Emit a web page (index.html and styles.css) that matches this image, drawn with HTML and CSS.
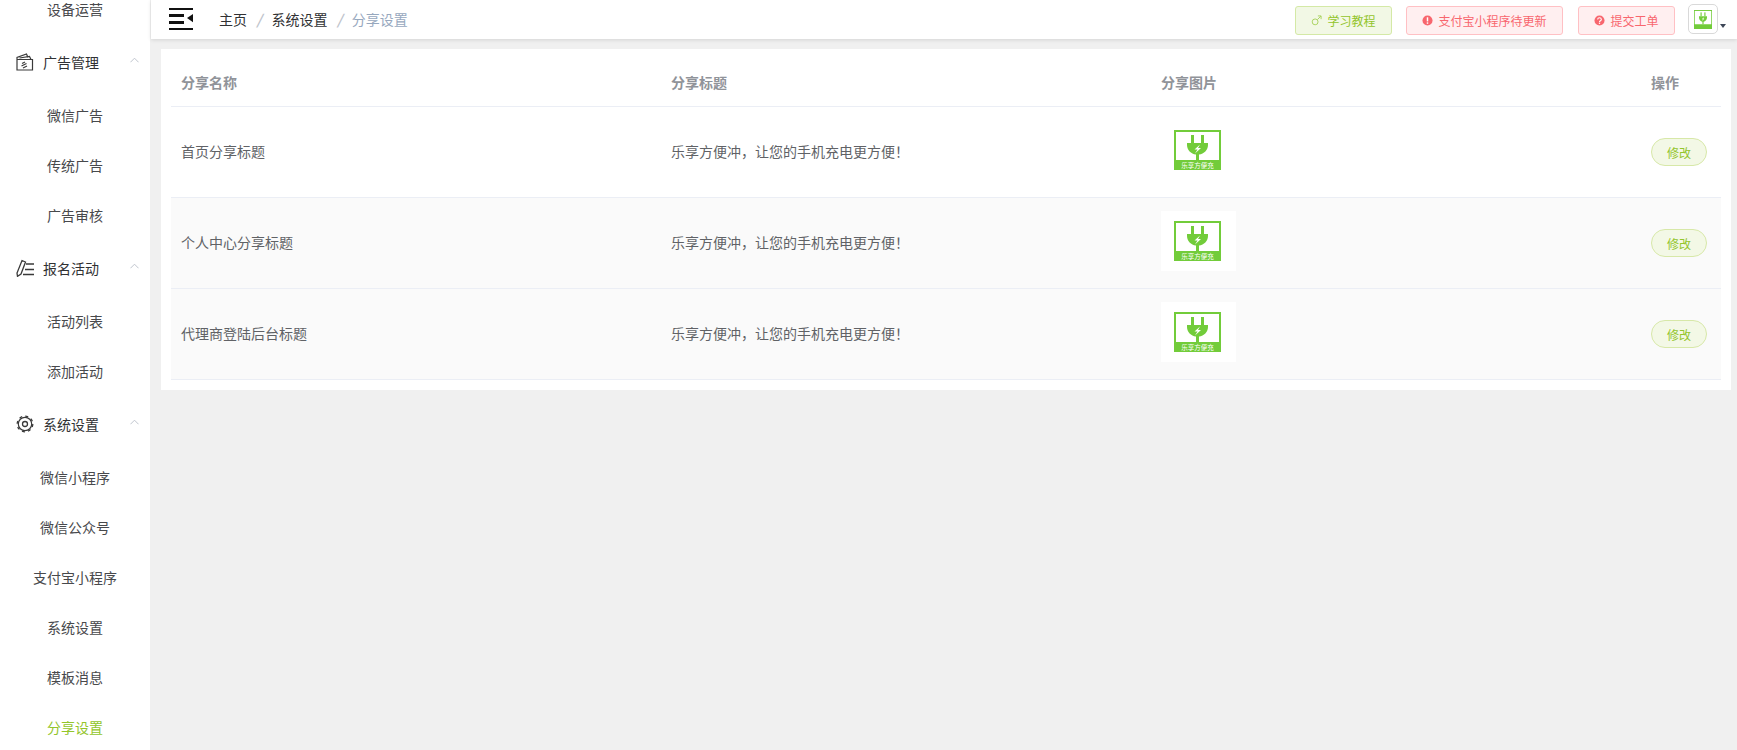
FILE: index.html
```html
<!DOCTYPE html>
<html lang="zh-CN">
<head>
<meta charset="utf-8">
<title>分享设置</title>
<link rel="stylesheet" href="styles.css">
</head>
<body>
<svg class="defs" width="0" height="0" aria-hidden="true">
  <symbol id="logo" viewBox="0 0 47 40" preserveAspectRatio="none">
    <rect x="0" y="0" width="47" height="40" fill="#72cc3a"/>
    <rect x="2" y="2" width="43" height="28" fill="#fff"/>
    <rect x="17" y="5" width="3" height="8" fill="#72cc3a"/>
    <rect x="27" y="5" width="3" height="8" fill="#72cc3a"/>
    <path d="M13 13h21v2c0 5-4 9-9 9.500v5.500h-3v-5.500c-5-.5-9-4.500-9-9.500z" fill="#72cc3a"/>
    <path d="M26 14.500l-5.500 5h3l-2.500 4 6-5.500h-3z" fill="#fff"/>
  </symbol>
</svg>
<div class="layout">
  <aside class="sidebar">
    <ul class="menu">
      <li class="sub">设备运营</li>
      <li class="head">
        <svg class="head-icon" viewBox="0 0 18 18"><path d="M1 6.500h15.500v10.500H1zM1 6.500V4.500L10.500 1l1.500 3.500M3.500 5l10-1.500 1.500 3M5.500 13l5-2.500M7 15l4-2M6 10.500l3-1.500" fill="none" stroke="#3a3a3a" stroke-width="1.200"/></svg>
        <span class="head-label">广告管理</span>
        <svg class="chevron" viewBox="0 0 10 6"><path d="M.5 5.500L5 1l4.500 4.500" fill="none" stroke="#b9bec8" stroke-width="1"/></svg>
      </li>
      <li class="sub">微信广告</li>
      <li class="sub">传统广告</li>
      <li class="sub">广告审核</li>
      <li class="head">
        <svg class="head-icon" viewBox="0 0 18 18"><path d="M6 1.500l3.500 1.500L5 15l-3.500 2.300L1 14zM10 5h8M9 10.500h9M7 15.500h11" fill="none" stroke="#3a3a3a" stroke-width="1.300"/></svg>
        <span class="head-label">报名活动</span>
        <svg class="chevron" viewBox="0 0 10 6"><path d="M.5 5.500L5 1l4.500 4.500" fill="none" stroke="#b9bec8" stroke-width="1"/></svg>
      </li>
      <li class="sub">活动列表</li>
      <li class="sub">添加活动</li>
      <li class="head">
        <svg class="head-icon" viewBox="0 0 18 18"><circle cx="9" cy="9" r="2.500" fill="none" stroke="#3a3a3a" stroke-width="1.300"/><circle cx="9" cy="9" r="6.700" fill="none" stroke="#3a3a3a" stroke-width="1.200"/><circle class="gear-teeth" cx="9" cy="9" r="7.800" fill="none" stroke="#3a3a3a" stroke-width="1.300"/></svg>
        <span class="head-label">系统设置</span>
        <svg class="chevron" viewBox="0 0 10 6"><path d="M.5 5.500L5 1l4.500 4.500" fill="none" stroke="#b9bec8" stroke-width="1"/></svg>
      </li>
      <li class="sub">微信小程序</li>
      <li class="sub">微信公众号</li>
      <li class="sub">支付宝小程序</li>
      <li class="sub">系统设置</li>
      <li class="sub">模板消息</li>
      <li class="sub active">分享设置</li>
    </ul>
  </aside>
  <div class="main">
    <header class="topbar">
      <svg class="hamburger" viewBox="0 0 24 22"><path d="M0 0h24v2H0zM0 6h15v3H0zM0 13h15v3H0zM0 20h24v2H0z" fill="#111"/><path d="M24 6.500v9l-6-4.500z" fill="#111" transform="translate(0 .2) scale(1 .9)"/></svg>
      <nav class="crumbs">
        <span class="crumb">主页</span><span class="sep">/</span>
        <span class="crumb">系统设置</span><span class="sep">/</span>
        <span class="crumb current">分享设置</span>
      </nav>
      <div class="actions">
        <button class="btn btn-green">
          <svg class="btn-icon" viewBox="0 0 12 12"><circle cx="4.500" cy="7.500" r="3.200" fill="none" stroke="#a6d15a" stroke-width="1"/><path d="M7 5l3.800-3.800M7.500 1h3.500v3.500" fill="none" stroke="#a6d15a" stroke-width="1"/></svg>
          学习教程
        </button>
        <button class="btn btn-red btn-pay">
          <svg class="btn-icon" viewBox="0 0 12 12"><circle cx="6" cy="6" r="5.500" fill="#f8666e"/><rect x="5.200" y="2.500" width="1.600" height="4.500" fill="#fff"/><rect x="5.200" y="8" width="1.600" height="1.600" fill="#fff"/></svg>
          支付宝小程序待更新
        </button>
        <button class="btn btn-red">
          <svg class="btn-icon" viewBox="0 0 12 12"><circle cx="6" cy="6" r="5.500" fill="#f8666e"/><path d="M4 4.800c0-2.400 4-2.400 4 0 0 1.500-2 1.400-2 2.900" fill="none" stroke="#fff" stroke-width="1.200"/><rect x="5.300" y="8.300" width="1.400" height="1.400" fill="#fff"/></svg>
          提交工单
        </button>
        <div class="avatar"><svg class="avatar-logo" viewBox="0 0 47 40" preserveAspectRatio="none"><use href="#logo"/></svg></div>
        <span class="caret"></span>
      </div>
    </header>
    <section class="card">
      <table class="table">
        <colgroup><col class="col-a"><col class="col-b"><col class="col-c"><col class="col-d"></colgroup>
        <thead>
          <tr><th>分享名称</th><th>分享标题</th><th>分享图片</th><th>操作</th></tr>
        </thead>
        <tbody>
          <tr>
            <td>首页分享标题</td><td>乐享方便冲，让您的手机充电更方便！</td>
            <td><div class="thumb"><svg class="thumb-logo" viewBox="0 0 47 40"><use href="#logo"/><text x="23.500" y="37.500" text-anchor="middle" class="logo-text">乐享方便充</text></svg></div></td>
            <td><button class="edit">修改</button></td>
          </tr>
          <tr class="alt">
            <td>个人中心分享标题</td><td>乐享方便冲，让您的手机充电更方便！</td>
            <td><div class="thumb"><svg class="thumb-logo" viewBox="0 0 47 40"><use href="#logo"/><text x="23.500" y="37.500" text-anchor="middle" class="logo-text">乐享方便充</text></svg></div></td>
            <td><button class="edit">修改</button></td>
          </tr>
          <tr class="alt">
            <td>代理商登陆后台标题</td><td>乐享方便冲，让您的手机充电更方便！</td>
            <td><div class="thumb"><svg class="thumb-logo" viewBox="0 0 47 40"><use href="#logo"/><text x="23.500" y="37.500" text-anchor="middle" class="logo-text">乐享方便充</text></svg></div></td>
            <td><button class="edit">修改</button></td>
          </tr>
        </tbody>
      </table>
    </section>
  </div>
</div>
</body>
</html>
```
FILE: styles.css
```css
* { box-sizing: border-box; }
html, body { margin: 0; height: 100%; overflow: hidden; }
body {
  background: #f0f0f0;
  font-family: "Noto Sans CJK SC", "Liberation Sans", sans-serif;
  font-size: 14px;
  color: #606266;
}
.defs { position: absolute; }
.logo-text { font-size: 6.500px; fill: #fff; font-family: "Noto Sans CJK SC", sans-serif; }
.layout { display: flex; height: 750px; }

.sidebar { width: 150px; flex: none; background: #fff; overflow: hidden; }
.menu { list-style: none; margin: -16px 0 0; padding: 0; }
.sub {
  height: 50px;
  display: flex;
  align-items: center;
  justify-content: center;
  line-height: 1;
  color: #48494c;
}
.sub.active { color: #93c52b; }
.head {
  height: 56px;
  display: flex;
  align-items: center;
  padding-left: 16px;
  color: #303133;
}
.head-icon { width: 18px; height: 18px; flex: none; }
.gear-teeth { stroke-dasharray: 3 3.130; }
.head-label { margin-left: 9px; }
.chevron { width: 9px; height: 6px; margin-left: 31px; margin-top: -4px; }

.main { flex: 1; min-width: 0; padding-left: 1px; }
.topbar {
  height: 39px;
  background: #fff;
  display: flex;
  align-items: center;
  padding: 0 11px 0 18px;
  box-shadow: 0 1px 4px rgba(0, 0, 0, .12);
}
.hamburger { width: 24px; height: 22px; flex: none; margin-top: -2px; }
.crumbs { display: flex; align-items: center; margin-left: 26px; margin-top: -1px; }
.crumb { color: #303133; }
.crumb.current { color: #97a8be; }
.sep { margin: 0 9.500px; color: #c0c4cc; font-weight: 700; font-style: italic; }
.actions { display: flex; align-items: center; margin-left: auto; margin-top: 1px; }
.btn {
  width: 97px;
  height: 29px;
  margin-right: 14px;
  display: flex;
  align-items: center;
  justify-content: center;
  gap: 5px;
  padding: 0;
  border-radius: 3px;
  font: inherit;
  font-size: 12px;
}
.btn-pay { width: 157px; margin-right: 15px; }
.btn-icon { width: 11px; height: 11px; flex: none; }
.btn-green { background: #f2f8e5; border: 1px solid #d4e9a6; color: #93c52b; }
.btn-red { background: #ffeff0; border: 1px solid #ffc0c4; color: #f8666e; }
.avatar {
  width: 30px;
  height: 30px;
  margin-left: -1px;
  margin-top: -2px;
  border: 1px solid #d9d9d9;
  border-radius: 5px;
  background: #fff;
  display: flex;
  align-items: center;
  justify-content: center;
}
.avatar-logo { width: 18px; height: 19px; }
.caret {
  width: 0;
  height: 0;
  margin: 12px 0 0 2px;
  border-left: 3.500px solid transparent;
  border-right: 3.500px solid transparent;
  border-top: 4px solid #3d4657;
}

.card { margin: 10px 6px 0 10px; padding: 0 10px 10px; background: #fff; }
.table { width: 100%; table-layout: fixed; border-collapse: separate; border-spacing: 0; }
.col-a { width: 490px; }
.col-b { width: 490px; }
.col-c { width: 490px; }
.col-d { width: 80px; }
th, td { padding: 0 10px; border-bottom: 1px solid #ebeef5; text-align: left; }
th { height: 58px; padding-top: 8px; font-size: 14px; font-weight: 700; color: #909399; }
td { height: 91px; padding-bottom: 2px; font-size: 14px; }
.alt td { background: #fafafa; }
.thumb {
  width: 75px;
  height: 60px;
  margin-bottom: 2px;
  padding-left: 13px;
  background: #fff;
  display: flex;
  align-items: center;
}
.thumb-logo { width: 47px; height: 40px; }
.edit {
  display: block;
  width: 56px;
  height: 28px;
  margin-top: 2px;
  padding: 0;
  border: 1px solid #d7e8a8;
  border-radius: 14px;
  background: #f3f8e6;
  color: #93c52b;
  font: inherit;
  font-size: 12px;
}
```
